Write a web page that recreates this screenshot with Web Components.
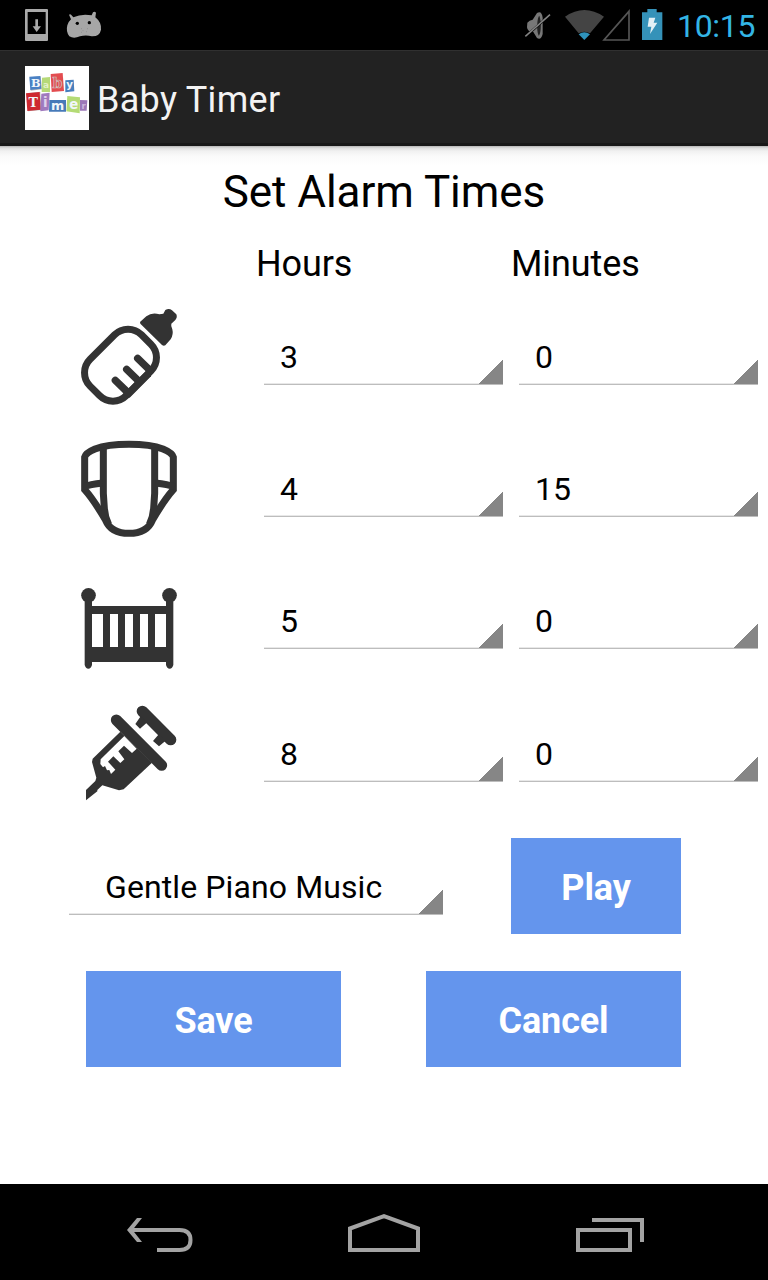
<!DOCTYPE html>
<html lang="en">
<head>
<meta charset="utf-8">
<title>Baby Timer</title>
<style>
    body {
        margin: 0;
        background: #fff;
        font-family: Roboto, sans-serif;
    }
</style>
</head>
<body>
<baby-timer-app></baby-timer-app>

<script>
const ICONS = {
    bottle: `<svg viewBox="0 -6 360 384" fill="#333">
        <rect x="-109" y="-77" width="218" height="154" rx="57" transform="translate(151.5 195.5) rotate(-45)" fill="none" stroke="#333" stroke-width="21"/>
        <path d="M136 241L172 276M170 208L207 244M203 175L240 211" stroke="#333" stroke-width="22" stroke-linecap="round"/>
        <path d="M158 283L248 193L243 229L179 293Z"/>
        <path d="M210 66L229 49Q246 36 268 43L280 41L286 30Q297 23 306 31L319 43Q323 52 316 60L304 71Q302 77 307 88Q311 104 302 118L286 136Q281 139 276 135L211 71Z"/>
    </svg>`,
    diaper: `<svg viewBox="0 0 360 384" fill="none" stroke="#333" stroke-width="21">
        <path d="M44 179V81Q47 69 75 57Q112 43 177 43Q242 43 279 57Q307 69 310 81V179Q283 209 247 271Q231 310 177 310Q123 310 107 271Q71 209 44 179Z"/>
        <path d="M100 52V190L103 235Q105 262 116 284M254 52V190L251 235Q249 262 238 284"/>
        <path d="M40 171Q60 163 98 159M314 171Q294 163 256 159"/>
    </svg>`,
    crib: `<svg viewBox="0 -39 360 384" fill="#333">
        <circle cx="55.5" cy="61" r="22"/><circle cx="298.5" cy="61" r="22"/>
        <path d="M44 68H66V270Q63 281 55 281Q47 281 44 270ZM288 68H310V270Q307 281 299 281Q291 281 288 270Z"/>
        <path d="M60 93H294V117H60ZM60 216H294V261H60ZM99 110H120V220H99ZM144 110H165V220H144ZM189 110H210V220H189ZM234 110H255V220H234Z"/>
    </svg>`,
    syringe: `<svg viewBox="0 0 360 384" fill="#333">
        <path d="M217 49L302 134" stroke="#333" stroke-width="34" stroke-linecap="round"/>
        <path d="M212 64L232 82L210 101L196 87ZM267 117L287 137L267 154L249 138Z"/>
        <path d="M139 75L275 211" stroke="#333" stroke-width="33" stroke-linecap="round"/>
        <path fill-rule="evenodd" d="M151 110L246 203L161 283L147 286L97 271L82 285V289L48 316V285L76 258L79 248L66 201L68 191ZM163 123L92 193L91 207L99 217L105 213L111 226L118 225L123 237L136 224L114 200L130 184L151 204L163 193L145 169L162 152L186 174L200 161Z"/>
    </svg>`,
    back: `<svg viewBox="-1.500 0 72 44"><path d="M4 16H54Q65 16 65 26T54 36H31.500" fill="none" stroke="#a3a3a3" stroke-width="4"/><path d="M11.500 4H16.500L7 16L16.500 28H11.500L1.500 16Z" fill="#a3a3a3"/></svg>`,
    home: `<svg viewBox="0 0 72 44"><path d="M2 36V14.500L36 2.200L70 14.500V36Z" fill="none" stroke="#a3a3a3" stroke-width="4"/></svg>`,
    recent: `<svg viewBox="-2 0 72 44"><path d="M4 16H56V36H4ZM18 6H68V28" fill="none" stroke="#a3a3a3" stroke-width="4"/></svg>`
};

class StatusBar extends HTMLElement {
    constructor() {
        super();
        this.attachShadow({ mode: 'open' });
        this.shadowRoot.innerHTML = `
        <style>
            :host {
                display: flex;
                justify-content: space-between;
                height: 50px;
                background: #000;
                color: #33b5e5;
            }
            svg { display: block; height: 50px; }
            .right { display: flex; }
            .clock {
                width: 91px;
                font-size: 32px;
                line-height: 52px;
                letter-spacing: -0.3px;
                white-space: nowrap;
            }
        </style>
        <svg width="120" viewBox="0 0 360 150">
            <path d="M78 27H141Q144 27 144 30V120Q144 123 141 123H78Q75 123 75 120V30Q75 27 78 27ZM83 36V102H137V36Z" fill="#aaa" fill-rule="evenodd"/>
            <path d="M106 58H114V79H123L110 96L98 79H106Z" fill="#aaa"/>
            <path d="M207 44Q211 41 214 45L220 52Q245 40 275 46L279 37Q284 33 288 38L286 52Q305 67 303 89Q299 110 275 109Q258 104 240 109Q221 117 208 109Q197 95 202 76Q206 64 213 58Z" fill="#a6a6a6"/>
            <circle cx="232" cy="70" r="5" fill="#000"/><circle cx="268" cy="68" r="5" fill="#000"/>
            <path d="M243 86h2M262 86h2M248 92h2M244 97h2M259 95h2" stroke="#777" stroke-width="2"/>
        </svg>
        <div class="right">
            <svg width="167" viewBox="0 0 501 150">
                <path d="M52 68Q58 61 68 59L81 39Q95 30 98 53V102Q93 122 81 114L70 96Q52 96 51 82Z" fill="#777"/>
                <path d="M88 47Q94 62 92 88Q90 106 86 107Q80 95 82 70Q83 52 88 47Z" fill="#222"/>
                <path d="M43 113L118 46" stroke="#000" stroke-width="7"/>
                <path d="M46 109L120 44" stroke="#858585" stroke-width="4.5"/>
                <path d="M165 50Q223 10 282 50L240 100Q223 91 206 100Z" fill="#444"/>
                <path d="M206 103Q223 91 240 103L223 120Z" fill="#2f93bc"/>
                <path d="M282 120H357V34Z" fill="none" stroke="#555" stroke-width="5"/>
                <path d="M396 37H412V27H440V37H457V120H396Z" fill="#3592b9"/>
                <path d="M417 53H436L431 68H442L420 102L424 80H413Z" fill="#e2f0f6"/>
            </svg>
            <span class="clock">10:15</span>
        </div>`;
    }
}

class ActionBar extends HTMLElement {
    constructor() {
        super();
        this.attachShadow({ mode: 'open' });
        this.shadowRoot.innerHTML = `
        <style>
            :host {
                display: flex;
                align-items: center;
                gap: 8px;
                box-sizing: border-box;
                height: 96px;
                padding: 2px 25px 0;
                background: #222;
                border-top: 1px solid #303030;
                border-bottom: 3px solid #181818;
                color: #f3f3f3;
                font-size: 36px;
                line-height: 42px;
            }
            svg { display: block; width: 64px; height: 64px; }
            svg text { font-family: "DejaVu Sans", sans-serif; font-weight: bold; text-anchor: middle; }
            svg .slab { font-family: "DejaVu Serif", serif; }
            .name { padding-top: 3px; letter-spacing: 0.3px; }
        </style>
        <svg viewBox="30 18 192 192">
            <rect x="30" y="18" width="192" height="192" fill="#fff"/>
            <path d="M44 52L77 49L81 88L47 92ZM35 100L76 95L79 150L39 154Z" fill="#bbb"/>
            <path d="M43 50L76 48L79 86L46 90Z" fill="#4a81c4"/>
            <path d="M81 53L105 51V96H80Z" fill="#b6d978"/>
            <path d="M107 42L143 39L147 93L110 96Z" fill="#e34c50"/>
            <path d="M151 61L176 59L178 94L151 97Z" fill="#477fbd"/>
            <path d="M33 100L74 96L77 149L37 153Z" fill="#ce2830"/>
            <path d="M79 101L104 98L101 151L76 154Z" fill="#a07abe"/>
            <path d="M103 120H153V155H102Z" fill="#477ab9"/>
            <path d="M157 108L195 112L194 160L154 154Z" fill="#b4db75"/>
            <path d="M195 120L217 121L215 152H195Z" fill="#9c77b8"/>
            <g fill="#f1f6fa">
                <text class="slab" x="62" y="82" font-size="34">B</text>
                <text x="93" y="83" font-size="27" fill="#e2f0c8">a</text>
                <text class="slab" x="127" y="85" font-size="42" fill="#e0585a" stroke="#cfc4c2" stroke-width="2">b</text>
                <text x="164" y="83" font-size="31">y</text>
                <text class="slab" x="55" y="142" font-size="38">T</text>
                <text x="91" y="142" font-size="40" fill="#e0d2ea">i</text>
                <text x="128" y="149" font-size="38">m</text>
                <text x="176" y="147" font-size="40">e</text>
                <text x="206" y="146" font-size="26" fill="#cbb6dc">r</text>
            </g>
        </svg>
        <span class="name"><slot></slot></span>`;
    }
}

class AlarmSpinner extends HTMLElement {
    constructor() {
        super();
        this.attachShadow({ mode: 'open' });
        this.shadowRoot.innerHTML = `
        <style>
            :host {
                display: flex;
                box-sizing: border-box;
                height: 57px;
                padding-left: var(--inset, 16px);
                font-size: 32px;
                line-height: 58px;
                white-space: nowrap;
                letter-spacing: var(--tracking, 0);
                background:
                    linear-gradient(135deg, transparent 49%, #868686 50%) right bottom 1px / 24px 24px no-repeat,
                    linear-gradient(#e8e8e8 50%, #bdbdbd 50%) bottom / 100% 2px no-repeat;
            }
        </style>
        <slot></slot>`;
    }
}

class AlarmRow extends HTMLElement {
    constructor() {
        super();
        this.attachShadow({ mode: 'open' });
    }

    connectedCallback() {
        this.shadowRoot.innerHTML = `
        <style>
            :host {
                display: grid;
                grid-template-columns: 194px 239px 255px;
                height: 132px;
                padding-left: 70px;
            }
            :host([icon="crib"]) { height: 133px; }
            svg { display: block; width: 120px; height: 128px; margin-top: 2px; }
            alarm-spinner { margin-top: 32px; }
            .minutes { margin-left: 16px; }
        </style>
        ${ICONS[this.getAttribute('icon')]}
        <alarm-spinner>${this.getAttribute('hours')}</alarm-spinner>
        <alarm-spinner class="minutes">${this.getAttribute('minutes')}</alarm-spinner>`;
    }
}

class FlatButton extends HTMLElement {
    constructor() {
        super();
        this.attachShadow({ mode: 'open' });
        this.shadowRoot.innerHTML = `
        <style>
            :host { display: block; height: 96px; }
            button {
                display: block;
                width: 100%;
                height: 100%;
                padding: 3px 0 0;
                border: none;
                background: #6495ed;
                color: #fff;
                font: bold 36px Roboto, sans-serif;
                letter-spacing: -0.15px;
            }
        </style>
        <button><slot></slot></button>`;
    }
}

class NavBar extends HTMLElement {
    constructor() {
        super();
        this.attachShadow({ mode: 'open' });
        this.shadowRoot.innerHTML = `
        <style>
            :host {
                display: flex;
                justify-content: center;
                gap: 152px;
                box-sizing: border-box;
                height: 96px;
                padding-top: 30px;
                background: #000;
            }
            svg { display: block; width: 72px; height: 44px; }
        </style>
        ${ICONS.back}${ICONS.home}${ICONS.recent}`;
    }
}

class BabyTimerApp extends HTMLElement {
    constructor() {
        super();
        this.attachShadow({ mode: 'open' });
        this.shadowRoot.innerHTML = `
        <style>
            :host {
                display: flex;
                flex-direction: column;
                width: 768px;
                height: 1280px;
                overflow: hidden;
                color: #000;
            }
            main {
                flex: 1;
                background: linear-gradient(#b5b5b5 0, #dedede 2px, #f1f1f1 5px, #fafafa 10px, #fff 20px);
            }
            h1 {
                margin: 0;
                height: 92px;
                font-size: 44px;
                font-weight: 400;
                line-height: 92px;
                text-align: center;
                letter-spacing: -0.05px;
            }
            .heads {
                display: grid;
                grid-template-columns: 255px 1fr;
                height: 58px;
                padding-left: 256px;
                font-size: 36px;
                line-height: 52px;
                letter-spacing: -0.1px;
            }
            .sound {
                display: flex;
                justify-content: space-between;
                padding: 13px 87px 0 69px;
            }
            .sound alarm-spinner { width: 374px; margin-top: 20px; --inset: 36px; --tracking: 0.1px; }
            .sound flat-button { width: 170px; }
            .actions {
                display: flex;
                justify-content: space-between;
                padding: 37px 87px 0 86px;
            }
            .actions flat-button { width: 255px; }
        </style>
        <status-bar></status-bar>
        <action-bar>Baby Timer</action-bar>
        <main>
            <h1>Set Alarm Times</h1>
            <div class="heads"><span>Hours</span><span>Minutes</span></div>
            <alarm-row icon="bottle" hours="3" minutes="0"></alarm-row>
            <alarm-row icon="diaper" hours="4" minutes="15"></alarm-row>
            <alarm-row icon="crib" hours="5" minutes="0"></alarm-row>
            <alarm-row icon="syringe" hours="8" minutes="0"></alarm-row>
            <div class="sound">
                <alarm-spinner>Gentle Piano Music</alarm-spinner>
                <flat-button>Play</flat-button>
            </div>
            <div class="actions">
                <flat-button>Save</flat-button>
                <flat-button>Cancel</flat-button>
            </div>
        </main>
        <nav-bar></nav-bar>`;
    }
}

customElements.define('status-bar', StatusBar);
customElements.define('action-bar', ActionBar);
customElements.define('alarm-spinner', AlarmSpinner);
customElements.define('alarm-row', AlarmRow);
customElements.define('flat-button', FlatButton);
customElements.define('nav-bar', NavBar);
customElements.define('baby-timer-app', BabyTimerApp);
</script>
</body>
</html>
